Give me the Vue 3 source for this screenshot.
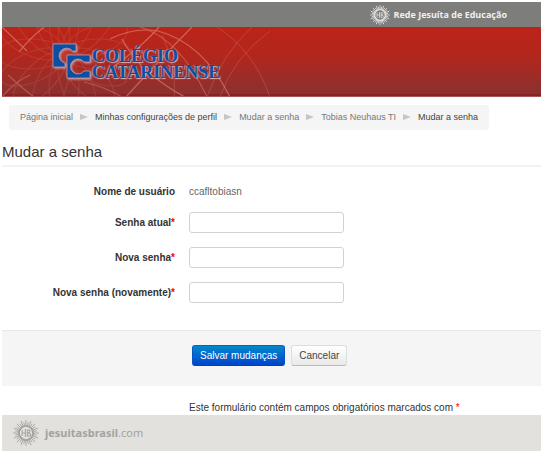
<script setup>
import { reactive } from 'vue'

const crumbs = [
  { label: 'Página inicial', strong: false },
  { label: 'Minhas configurações de perfil', strong: true },
  { label: 'Mudar a senha', strong: false },
  { label: 'Tobias Neuhaus TI', strong: false },
  { label: 'Mudar a senha', strong: true }
]

const fields = [
  { id: 'current', label: 'Senha atual' },
  { id: 'new', label: 'Nova senha' },
  { id: 'confirm', label: 'Nova senha (novamente)' }
]

const values = reactive({ current: '', new: '', confirm: '' })

const petals = Array.from({ length: 16 }, (_, i) => i * 22.5)
const rays = Array.from({ length: 32 }, (_, i) => i * 11.25)

function reset() {
  values.current = ''
  values.new = ''
  values.confirm = ''
}
</script>

<template>
  <div class="page">
    <div class="network">
      <svg class="seal" viewBox="0 0 40 40" aria-hidden="true">
        <g stroke="currentColor" stroke-width="1.6">
          <line v-for="(r, i) in rays" :key="r" x1="20" :y1="i % 2 ? 3 : 0" x2="20" y2="8" :transform="`rotate(${r} 20 20)`" />
        </g>
        <circle cx="20" cy="20" r="11" fill="none" stroke="currentColor" stroke-width="3.4" />
        <path d="M14 15v10M14 20h5M19 14v12M22 15v10M22 15q5 0 4 3q-1 2-4 2q5 0 5 3q0 2-5 2" fill="none" stroke="currentColor" stroke-width="1.6" />
      </svg>
      <span>Rede Jesuíta de Educação</span>
    </div>

    <header class="banner">
      <svg class="rosette" viewBox="0 0 270 70" width="270" height="70" aria-hidden="true">
        <g fill="none" stroke="#f0a08c">
          <g opacity=".16">
            <ellipse v-for="p in petals" :key="p" cx="62" cy="-7" rx="15" ry="34" :transform="`rotate(${p} 62 27)`" />
          </g>
          <g opacity=".5" stroke-width="1.2">
            <path d="M108 12Q132 0 156 4Q201 16 228 70" />
            <path d="M138 0Q178 12 205 70" opacity=".7" />
            <path d="M190 0Q158 32 124 70" />
            <path d="M157 0Q140 20 105 44" />
            <path d="M120 12Q138 46 183 70" />
            <path d="M160 8Q175 40 172 70" opacity=".4" />
            <path d="M0 0L25 24M42 0Q27 12 17 25" />
            <path d="M0 70Q12 55 28 48M6 48Q20 61 32 70M82 55Q103 60 120 70" opacity=".7" />
          </g>
          <g opacity=".24">
            <path d="M215 0Q252 24 268 70M250 0Q220 27 205 70M268 4Q231 31 218 70" />
          </g>
        </g>
      </svg>
      <div class="brand">
        <svg class="monogram" viewBox="0 0 39 36" width="39" height="36" aria-hidden="true">
          <g fill="#0b4ea2" stroke="#b99aa8" stroke-width=".8" stroke-linejoin="round">
            <path d="M1 1H24V8H20.5A7.5 7.5 0 1 0 13 20V24H1Z" />
            <path d="M15 12H38V19H32A7.5 7.5 0 1 0 32 28H38V35H15Z" />
          </g>
        </svg>
        <div class="brand-name">
          <div>COLÉGIO</div>
          <div>CATARINENSE</div>
        </div>
      </div>
    </header>

    <nav class="crumbs" aria-label="Navegação">
      <template v-for="(c, i) in crumbs" :key="i">
        <svg v-if="i" class="arrow" viewBox="0 0 8 6" aria-hidden="true"><path d="M0 0L8 3L0 6Z" fill="#c6c6c6" /></svg>
        <a href="#" :class="{ strong: c.strong }">{{ c.label }}</a>
      </template>
    </nav>

    <h1>Mudar a senha</h1>

    <form @submit.prevent>
      <div class="rows">
        <div class="row">
          <span class="label">Nome de usuário</span>
          <span class="user">ccafltobiasn</span>
        </div>
        <div v-for="f in fields" :key="f.id" class="row">
          <label class="label" :for="f.id">{{ f.label }}<span class="req">*</span></label>
          <input :id="f.id" v-model="values[f.id]" type="password">
        </div>
      </div>
      <div class="actions">
        <button type="submit" class="btn primary">Salvar mudanças</button>
        <button type="button" class="btn" @click="reset">Cancelar</button>
      </div>
      <p class="note">Este formulário contém campos obrigatórios marcados com <span class="req">*</span></p>
    </form>

    <footer>
      <svg class="seal" viewBox="0 0 40 40" aria-hidden="true">
        <g stroke="currentColor" stroke-width="1.3">
          <line v-for="(r, i) in rays" :key="r" x1="20" :y1="i % 2 ? 3 : 0" x2="20" y2="8" :transform="`rotate(${r} 20 20)`" />
        </g>
        <circle cx="20" cy="20" r="11" fill="none" stroke="currentColor" stroke-width="3" />
        <path d="M14 15v10M14 20h5M19 14v12M22 15v10M22 15q5 0 4 3q-1 2-4 2q5 0 5 3q0 2-5 2" fill="none" stroke="currentColor" stroke-width="1.6" />
      </svg>
      <span><b>jesuitasbrasil</b>.com</span>
    </footer>
  </div>
</template>

<style>
body {
  background: #fff;
}
</style>

<style scoped>
.page {
  padding: 2px;
  font: 10px/14px "Liberation Sans", Arial, sans-serif;
  color: #333;
}
.network {
  display: flex;
  align-items: center;
  justify-content: flex-end;
  gap: 4px;
  height: 25px;
  padding-right: 34px;
  background: #7d7d7b;
  color: #f0f0f0;
  font: bold 9px/14px "Open Sans", "Noto Sans", sans-serif;
}
.network .seal {
  width: 20px;
  height: 20px;
  color: #dcdcdc;
}
.banner {
  display: grid;
  height: 70px;
  box-sizing: border-box;
  border-bottom: 1px solid #a85a5a;
  background: linear-gradient(#bb2418, #b3261d 40%, #8b312f 97%, #8a2024 97%);
  overflow: hidden;
}
.rosette,
.brand {
  grid-area: 1 / 1;
}
.brand {
  display: flex;
  gap: 1px;
  padding: 16px 0 0 50px;
}
.monogram {
  filter: drop-shadow(1px 1px 1px #c9a0a8);
}
.brand-name {
  padding-top: 5px;
  font: bold 18px/16px "Liberation Serif", serif;
  color: #0b4ea2;
  text-shadow: 1px 1px 1px #dcb8be, -1px 0 1px #c08890;
}
.crumbs {
  display: flex;
  align-items: center;
  gap: 7px;
  width: fit-content;
  margin: 8px 7px 0;
  padding: 5px 11px 6px;
  border-radius: 3px;
  background: #f5f5f5;
  font-size: 9px;
  white-space: nowrap;
}
.crumbs a {
  color: #777;
  text-decoration: none;
}
.crumbs a.strong {
  color: #444;
}
.arrow {
  width: 8px;
  height: 6px;
  flex: none;
}
h1 {
  margin: 11px 0 0;
  padding-bottom: 3px;
  border-bottom: 2px solid #f2f2f2;
  font-size: 15px;
  line-height: 21px;
  font-weight: normal;
}
.rows {
  display: grid;
  gap: 14px;
  padding: 15px 0 27px;
}
.row {
  display: grid;
  grid-template-columns: 173px 155px;
  align-items: center;
  column-gap: 14px;
  min-height: 21px;
}
.row:first-child {
  min-height: 20px;
  margin-bottom: -4px;
}
.label {
  text-align: right;
  font-weight: bold;
}
.user {
  color: #666;
}
.req {
  color: #f00;
}
input {
  box-sizing: border-box;
  width: 100%;
  height: 21px;
  padding: 2px 4px;
  border: 1px solid #d2d2d2;
  border-radius: 3px;
  background: #fff;
  font: inherit;
}
.actions {
  display: flex;
  gap: 6px;
  padding: 14px 0 20px 190px;
  border-top: 1px solid #e8e8e8;
  background: #f5f5f5;
}
.btn {
  height: 21px;
  padding: 0 7px;
  border: 1px solid #ddd;
  border-bottom-color: #bbb;
  border-radius: 3px;
  background: linear-gradient(#fff, #e9e9e9);
  font: inherit;
  color: #444;
}
.btn.primary {
  border-color: #0a62c4 #0a55c4 #0a3fa8;
  background: linear-gradient(#0088cc, #0044cc);
  color: #fff;
}
.note {
  margin: 15px 0 0;
  padding-left: 187px;
}
footer {
  display: flex;
  align-items: center;
  gap: 6px;
  height: 36px;
  padding-left: 11px;
  background: #e2e1dd;
  color: #a3a3a1;
  font: 11px/16px "Noto Sans", sans-serif;
}
footer .seal {
  width: 26px;
  height: 26px;
}
</style>
